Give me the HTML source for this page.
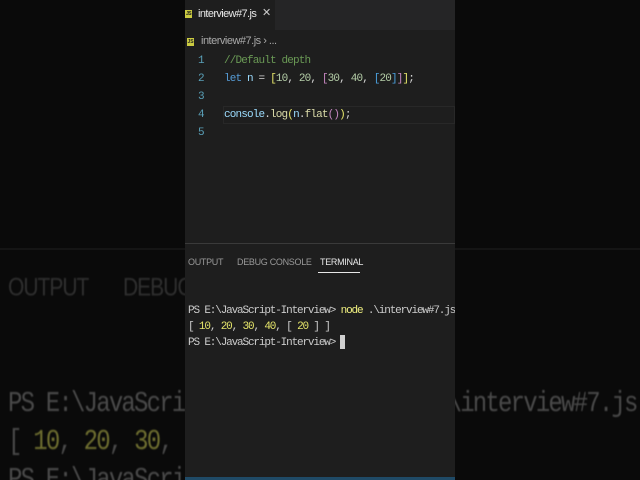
<!DOCTYPE html>
<html><head><meta charset="utf-8"><style>
*{margin:0;padding:0;box-sizing:border-box}
html,body{width:640px;height:480px;overflow:hidden}
body{background:#0a0a0a;position:relative;font-family:"Liberation Sans",sans-serif}
.bg{position:absolute;white-space:pre;font-family:"Liberation Mono",monospace;font-size:24px;letter-spacing:-1.8px;color:#4a4a4a;filter:blur(0.6px);transform:scaleY(1.2);transform-origin:0 0}
.panel{position:absolute;left:185px;top:0;width:270px;height:480px;background:#1e1e1e;overflow:hidden}
.tabs{position:absolute;left:0;top:0;width:270px;height:30px;background:#252526}
.tab{position:absolute;left:0;top:0;width:90px;height:30px;background:#1e1e1e;color:#e8e8e8;font-size:11px;letter-spacing:-0.6px}
.js{position:absolute;width:7px;height:8px;background:#cbcb41;color:#1e1e1e;font-size:5px;line-height:9px;text-align:center;font-weight:bold}
.mono{font-family:"Liberation Mono",monospace;white-space:pre;position:absolute}
.code{font-size:11px;letter-spacing:-0.85px;color:#d4d4d4}
.ln{color:#5aa0b8;font-size:11px;position:absolute;left:13px;font-family:"Liberation Mono",monospace}
.term{font-size:11px;letter-spacing:-1.15px;color:#cccccc}
.y{color:#e5e56a}.p{color:#c586c0}.b{color:#4a9fdc}.g{color:#6a9955}.k{color:#569cd6}.v{color:#9cdcfe}.f{color:#dcdcaa}.n{color:#b5cea8}
</style></head><body>
<div class="bg" style="left:8px;top:274px;font-family:'Liberation Sans',sans-serif;font-size:21px;letter-spacing:-1px;color:#303030">OUTPUT</div>
<div class="bg" style="left:123px;top:274px;font-family:'Liberation Sans',sans-serif;font-size:21px;letter-spacing:-1px;color:#303030">DEBUG</div>
<div style="position:absolute;left:0;top:248px;width:640px;height:2px;background:#151515"></div>
<div class="bg" style="left:8px;top:388px">PS E:\JavaScri</div>
<div class="bg" style="left:435px;top:388px">.\interview#7.js</div>
<div class="bg" style="left:8px;top:426px">[ <span style="color:#6e6e30">10</span>, <span style="color:#6e6e30">20</span>, <span style="color:#6e6e30">30</span>,</div>
<div class="bg" style="left:8px;top:464px">PS E:\JavaScri</div>
<div class="panel">
 <div class="tabs"><div class="tab"><div class="js" style="left:0;top:10px">JS</div><span style="position:absolute;left:13px;top:8px">interview#7.js</span><span style="position:absolute;left:77px;top:6px;font-size:11px;color:#ccc">✕</span></div></div>
 <div class="js" style="left:2px;top:38px">JS</div>
 <div style="position:absolute;left:16px;top:35px;font-size:11px;color:#aaa;letter-spacing:-0.5px">interview#7.js › ...</div>
 <div class="ln" style="top:55px">1</div><div class="ln" style="top:73px">2</div><div class="ln" style="top:91px">3</div><div class="ln" style="top:109px">4</div><div class="ln" style="top:127px">5</div>
 <div style="position:absolute;left:38px;top:106px;width:232px;height:18px;border:1px solid #282828"></div>
 <div class="mono code g" style="left:39px;top:55px">//Default depth</div>
 <div class="mono code" style="left:39px;top:73px"><span class="k">let</span> <span class="v">n</span> = <span class="y">[</span><span class="n">10</span>, <span class="n">20</span>, <span class="p">[</span><span class="n">30</span>, <span class="n">40</span>, <span class="b">[</span><span class="n">20</span><span class="b">]</span><span class="p">]</span><span class="y">]</span>;</div>
 <div class="mono code" style="left:39px;top:109px"><span class="v">console</span>.<span class="f">log</span><span class="y">(</span><span class="v">n</span>.<span class="f">flat</span><span class="p">()</span><span class="y">)</span>;</div>
 <div style="position:absolute;left:0;top:243px;width:270px;height:1px;background:#3a3a3a"></div>
 <div style="position:absolute;left:3px;top:257px;font-size:9px;color:#999;letter-spacing:-0.3px">OUTPUT</div>
 <div style="position:absolute;left:52px;top:257px;font-size:9px;color:#999;letter-spacing:-0.3px">DEBUG CONSOLE</div>
 <div style="position:absolute;left:135px;top:257px;font-size:9px;color:#e7e7e7;letter-spacing:-0.3px">TERMINAL</div>
 <div style="position:absolute;left:133px;top:272px;width:42px;height:1px;background:#e7e7e7"></div>
 <div class="mono term" style="left:3px;top:305px">PS E:\JavaScript-Interview&gt; <span style="color:#f0f080">node</span> .\interview#7.js</div>
 <div class="mono term" style="left:3px;top:321px">[ <span class="y">10</span>, <span class="y">20</span>, <span class="y">30</span>, <span class="y">40</span>, [ <span class="y">20</span> ] ]</div>
 <div class="mono term" style="left:3px;top:337px">PS E:\JavaScript-Interview&gt;</div>
 <div style="position:absolute;left:155px;top:335px;width:5px;height:14px;background:#d0d0d0"></div>
 <div style="position:absolute;left:0;top:477px;width:270px;height:3px;background:#1f4a66"></div>
</div>
</body></html>
